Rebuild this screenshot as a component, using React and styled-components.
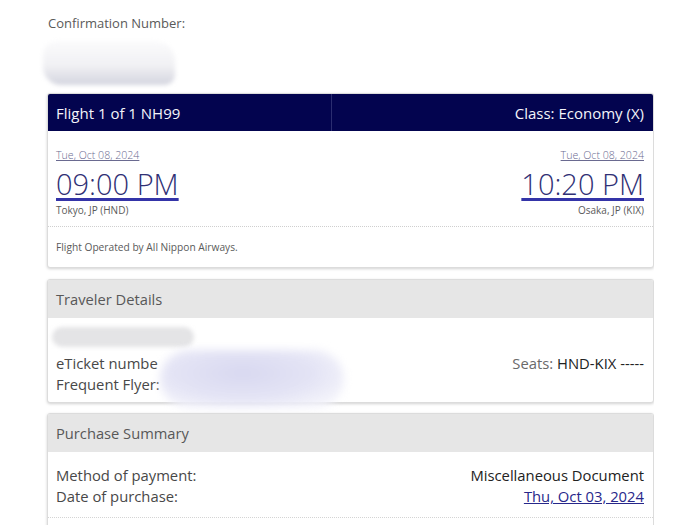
import React from "react";
import styled, { createGlobalStyle } from "styled-components";

const GlobalStyle = createGlobalStyle`
  html, body {
    margin: 0;
    padding: 0;
    background: #fff;
    font-family: "Open Sans", "Noto Sans", sans-serif;
  }
`;

const Page = styled.div`
  width: 607px;
  padding: 14px 0 0 47px;
  height: 511px;
  overflow: hidden;
`;

const ConfLabel = styled.div`
  font-size: 13px;
  line-height: 18px;
  color: #5a5a5a;
  padding-left: 1px;
`;

const ConfBlob = styled.div`
  width: 132px;
  height: 44px;
  margin: 9px 0 8px -4px;
  border-radius: 14px 20px 10px 18px;
  background: linear-gradient(180deg, #fbfbfc 0%, #f1f1f4 55%, #d4d5df 100%);
  filter: blur(2px);
`;

const Card = styled.div`
  position: relative;
  background: #fff;
  border: 1px solid #dcdcdc;
  border-radius: 3px;
  box-shadow: 0 1px 3px rgba(0, 0, 0, 0.18);
  margin-bottom: ${(p) => p.$gap || 10}px;
`;

const NavyHeader = styled.div`
  display: grid;
  grid-template-columns: 283px 1fr;
  height: 37px;
  background: #03044f;
  border-radius: 2px 2px 0 0;
  color: #f4f4fa;
  font-size: 15px;
`;

const HeaderCell = styled.div`
  display: flex;
  align-items: center;
  justify-content: ${(p) => (p.$right ? "flex-end" : "flex-start")};
  padding: 0 9px 0 8px;
  border-left: ${(p) => (p.$right ? "1px solid #2b2d70" : "none")};
`;

const GrayHeader = styled.div`
  height: 38px;
  display: flex;
  align-items: center;
  padding: 0 8px;
  background: #e6e6e6;
  color: #585858;
  font-size: 14.7px;
  border-radius: 2px 2px 0 0;
`;

const FlightBody = styled.div`
  display: flex;
  justify-content: space-between;
  padding: 17px 9px 9px 8px;
  border-bottom: 1px dotted #cfcfcf;
`;

const Stop = styled.div`
  display: flex;
  flex-direction: column;
  align-items: ${(p) => (p.$right ? "flex-end" : "flex-start")};
`;

const DateLink = styled.a`
  font-size: 10.6px;
  line-height: 14px;
  font-weight: 300;
  color: #6a6a90;
  text-decoration: underline;
`;

const Time = styled.a`
  margin-top: 6px;
  font-size: 29px;
  line-height: 32px;
  font-weight: 300;
  color: #303075;
  text-decoration: underline;
  text-decoration-color: #3434a8;
  text-decoration-thickness: 3px;
  text-underline-offset: 3px;
`;

const City = styled.div`
  margin-top: 3px;
  font-size: 10px;
  line-height: 14px;
  color: #5a5a5a;
`;

const Operated = styled.div`
  height: 40px;
  display: flex;
  align-items: center;
  padding: 0 8px;
  font-size: 10.2px;
  color: #5a5a5a;
`;

const Body = styled.div`
  padding: 9px 9px 7px 8px;
`;

const NameBlob = styled.div`
  width: 142px;
  height: 20px;
  margin: 0 0 6px -4px;
  border-radius: 10px;
  background: #e4e4e6;
  filter: blur(2px);
`;

const Row = styled.div`
  display: flex;
  justify-content: space-between;
  align-items: flex-start;
`;

const Lines = styled.div`
  display: flex;
  flex-direction: column;
  align-items: ${(p) => (p.$right ? "flex-end" : "flex-start")};
  font-size: 14.8px;
  line-height: 21px;
  color: #484848;
`;

const Dark = styled.span`
  color: #222;
`;

const Muted = styled.span`
  color: #6a6a6a;
`;

const PurchaseLink = styled.a`
  color: #27278a;
  text-decoration: underline;
`;

const SmudgeBlob = styled.div`
  position: absolute;
  left: 112px;
  top: 70px;
  width: 184px;
  height: 58px;
  border-radius: 30px;
  background: radial-gradient(ellipse at 45% 40%, #d8d8f0 0%, #e4e4f5 50%, rgba(242, 242, 250, 0.9) 80%);
  filter: blur(4px);
`;

const PurchaseBody = styled.div`
  padding: 13px 9px 10px 8px;
  border-bottom: 1px dotted #d4d4d4;
`;

const Spacer = styled.div`
  height: 40px;
`;

export default function App() {
  return (
    <>
      <GlobalStyle />
      <Page>
        <ConfLabel>Confirmation Number:</ConfLabel>
        <ConfBlob />

        <Card $gap={11}>
          <NavyHeader>
            <HeaderCell>Flight 1 of 1 NH99</HeaderCell>
            <HeaderCell $right>Class: Economy (X)</HeaderCell>
          </NavyHeader>
          <FlightBody>
            <Stop>
              <DateLink>Tue, Oct 08, 2024</DateLink>
              <Time>09:00 PM</Time>
              <City>Tokyo, JP (HND)</City>
            </Stop>
            <Stop $right>
              <DateLink>Tue, Oct 08, 2024</DateLink>
              <Time>10:20 PM</Time>
              <City>Osaka, JP (KIX)</City>
            </Stop>
          </FlightBody>
          <Operated>Flight Operated by All Nippon Airways.</Operated>
        </Card>

        <Card>
          <GrayHeader>Traveler Details</GrayHeader>
          <Body>
            <NameBlob />
            <Row>
              <Lines>
                <span>eTicket numbe</span>
                <span>Frequent Flyer:</span>
              </Lines>
              <Lines $right>
                <span>
                  <Muted>Seats: </Muted>
                  <Dark>HND-KIX -----</Dark>
                </span>
              </Lines>
            </Row>
          </Body>
          <SmudgeBlob />
        </Card>

        <Card>
          <GrayHeader>Purchase Summary</GrayHeader>
          <PurchaseBody>
            <Row>
              <Lines>
                <span>Method of payment:</span>
                <span>Date of purchase:</span>
              </Lines>
              <Lines $right>
                <Dark>Miscellaneous Document</Dark>
                <PurchaseLink>Thu, Oct 03, 2024</PurchaseLink>
              </Lines>
            </Row>
          </PurchaseBody>
          <Spacer />
        </Card>
      </Page>
    </>
  );
}
